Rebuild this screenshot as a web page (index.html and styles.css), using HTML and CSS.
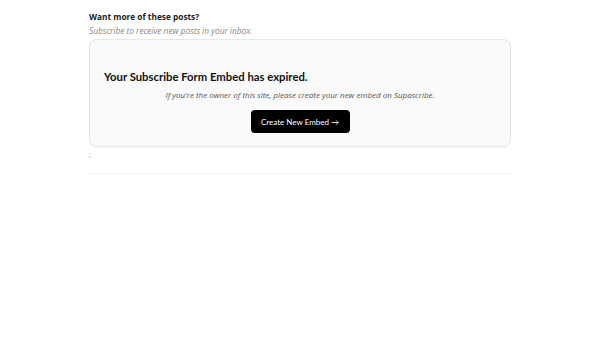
FILE: index.html
```html
<!DOCTYPE html>
<html lang="en">

<head>
  <meta charset="UTF-8">
  <meta name="viewport" content="width=device-width, initial-scale=1.0">
  <title>Want more of these posts?</title>
  <link rel="stylesheet" href="styles.css">
</head>

<body>
  <div class="container">
    <!-- Subscribe header -->
    <div class="subscribe-head">
      <h4>Want more of these posts?</h4>
      <p>Subscribe to receive new posts in your inbox.</p>
    </div>

    <!-- Expired embed card -->
    <div class="embed-card">
      <h2>Your Subscribe Form Embed has expired.</h2>
      <p>If you're the owner of this site, please create your new embed on Supascribe.</p>
      <button class="embed-btn">Create New Embed &rarr;</button>
    </div>

    <div class="stray">;</div>

    <hr class="divider">
  </div>
</body>

</html>
```

FILE: styles.css
```css
/* General Styles */
body {
  font-family: 'Open Sans', sans-serif;
  margin: 0;
  padding: 0;
  background: #fff;
  color: #222;
}

.container {
  width: 422px;
  margin: 0 auto;
  padding-top: 10px;
}

/* Subscribe header */
.subscribe-head h4 {
  margin: 0;
  font-size: 8.3px;
  font-weight: 700;
  line-height: 14px;
  color: #222;
}

.subscribe-head p {
  margin: 0;
  font-size: 8.3px;
  font-style: italic;
  line-height: 13px;
  color: #888;
}

/* Expired embed card */
.embed-card {
  margin-top: 2px;
  height: 108px;
  box-sizing: border-box;
  padding: 29px 14px 0;
  background-color: #fafafa;
  border: 1px solid #e6e6e6;
  border-radius: 8px;
  box-shadow: 0 1px 2px rgba(0, 0, 0, 0.04);
  text-align: center;
}

.embed-card h2 {
  margin: 0;
  font-family: 'Lato', sans-serif;
  font-size: 11.3px;
  font-weight: 700;
  line-height: 15px;
  color: #111;
  text-align: left;
}

.embed-card p {
  margin: 5px 0 0;
  font-size: 8px;
  font-style: italic;
  line-height: 12px;
  color: #555;
}

.embed-btn {
  margin-top: 9px;
  width: 99px;
  height: 23px;
  padding: 0;
  font-family: 'Lato', sans-serif;
  font-size: 8px;
  color: #fff;
  background: #000;
  border: none;
  border-radius: 4px;
  cursor: pointer;
}

.stray {
  margin-top: 1px;
  font-size: 8px;
  line-height: 12px;
  color: #999;
}

.divider {
  margin: 13px 0 0;
  border: none;
  border-top: 1px solid #f0f0f0;
}
```
